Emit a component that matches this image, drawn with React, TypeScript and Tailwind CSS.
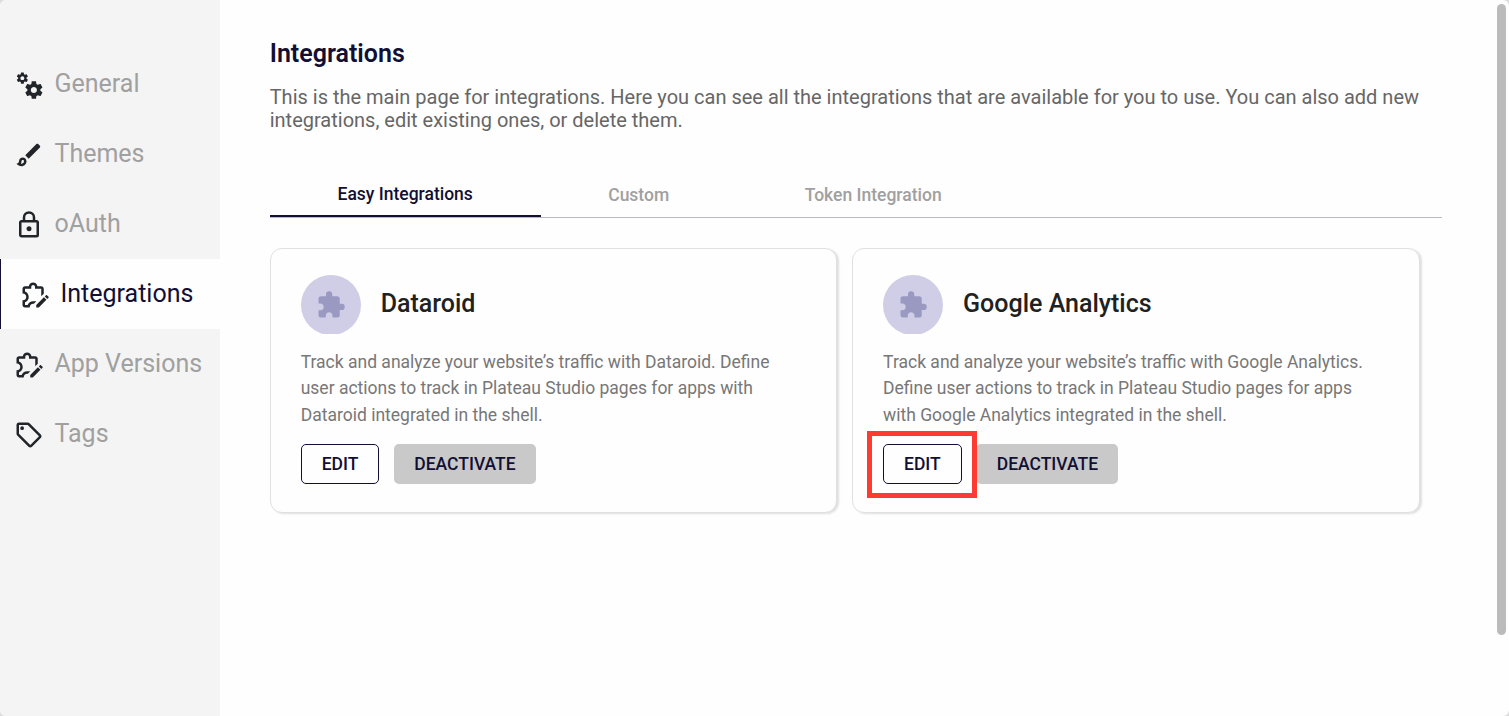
import React from "react";

const paths = {
  cogs: "M15.9,18.45C17.25,18.45 18.35,17.35 18.35,16C18.35,14.65 17.25,13.55 15.9,13.55C14.54,13.55 13.45,14.65 13.45,16C13.45,17.35 14.54,18.45 15.9,18.45M21.1,16.68L22.58,17.84C22.71,17.95 22.75,18.13 22.66,18.29L21.26,20.71C21.17,20.86 21,20.92 20.83,20.86L19.09,20.16C18.73,20.44 18.33,20.67 17.91,20.85L17.64,22.7C17.62,22.87 17.47,23 17.3,23H14.5C14.32,23 14.18,22.87 14.15,22.7L13.89,20.85C13.46,20.67 13.07,20.44 12.71,20.16L10.96,20.86C10.81,20.92 10.62,20.86 10.54,20.71L9.14,18.29C9.05,18.13 9.09,17.95 9.22,17.84L10.7,16.68L10.65,16L10.7,15.31L9.22,14.16C9.09,14.05 9.05,13.86 9.14,13.71L10.54,11.29C10.62,11.13 10.81,11.07 10.96,11.13L12.71,11.84C13.07,11.56 13.46,11.32 13.89,11.15L14.15,9.29C14.18,9.13 14.32,9 14.5,9H17.3C17.47,9 17.62,9.13 17.64,9.29L17.91,11.15C18.33,11.32 18.73,11.56 19.09,11.84L20.83,11.13C21,11.07 21.17,11.13 21.26,11.29L22.66,13.71C22.75,13.86 22.71,14.05 22.58,14.16L21.1,15.31L21.15,16L21.1,16.68M6.69,8.07C7.56,8.07 8.26,7.37 8.26,6.5C8.26,5.63 7.56,4.92 6.69,4.92C5.82,4.92 5.12,5.63 5.12,6.5C5.12,7.37 5.82,8.07 6.69,8.07M10.03,6.94L11,7.68C11.07,7.75 11.09,7.87 11.03,7.97L10.13,9.53C10.08,9.63 9.96,9.67 9.86,9.63L8.74,9.18L8,9.62L7.81,10.81C7.79,10.92 7.7,11 7.59,11H5.79C5.67,11 5.58,10.92 5.56,10.81L5.4,9.62L4.64,9.18L3.52,9.63C3.41,9.67 3.3,9.63 3.24,9.53L2.34,7.97C2.28,7.87 2.31,7.75 2.39,7.68L3.34,6.94L3.31,6.5L3.34,6.06L2.39,5.32C2.31,5.25 2.28,5.13 2.34,5.03L3.24,3.47C3.3,3.37 3.41,3.33 3.52,3.37L4.63,3.82L5.4,3.38L5.56,2.19C5.58,2.08 5.67,2 5.79,2H7.59C7.7,2 7.79,2.08 7.81,2.19L8,3.38L8.74,3.82L9.86,3.37C9.96,3.33 10.08,3.37 10.13,3.47L11.03,5.03C11.09,5.13 11.07,5.25 11,5.32L10.03,6.06L10.06,6.5L10.03,6.94Z",
  brush:
    "M7 16C7.55 16 8 16.45 8 17C8 18.1 7.1 19 6 19C5.83 19 5.67 19 5.5 18.95C5.81 18.4 6 17.74 6 17C6 16.45 6.45 16 7 16M18.67 3C18.41 3 18.16 3.1 17.96 3.29L9 12.25L11.75 15L20.71 6.04C21.1 5.65 21.1 5 20.71 4.63L19.37 3.29C19.17 3.09 18.92 3 18.67 3M7 14C5.34 14 4 15.34 4 17C4 18.31 2.84 19 2 19C2.92 20.22 4.5 21 6 21C8.21 21 10 19.21 10 17C10 15.34 8.66 14 7 14Z",
  lock: "M12,17C10.89,17 10,16.1 10,15C10,13.89 10.89,13 12,13A2,2 0 0,1 14,15A2,2 0 0,1 12,17M18,20V10H6V20H18M18,8A2,2 0 0,1 20,10V20A2,2 0 0,1 18,22H6C4.89,22 4,21.1 4,20V10C4,8.89 4.89,8 6,8H7V6A5,5 0 0,1 12,1A5,5 0 0,1 17,6V8H18M12,3A3,3 0 0,0 9,6V8H15V6A3,3 0 0,0 12,3Z",
  puzzleEdit:
    "M22.85 13.47L21.53 12.15C21.33 11.95 21 11.95 20.81 12.15L19.83 13.13L21.87 15.17L22.85 14.19C23.05 14 23.05 13.67 22.85 13.47M13 19.96V22H15.04L21.17 15.88L19.13 13.83L13 19.96M11.09 19.05C9.2 18.72 7.9 20 7.8 21.7V22H4C2.9 22 2 21.1 2 20V16.2H2.3C3.79 16.2 5 15 5 13.5S3.79 10.8 2.3 10.8H2V7C2 5.9 2.9 5 4 5H7.04C7.28 3.3 8.74 2 10.5 2S13.72 3.3 13.96 5H17C18.1 5 19 5.9 19 7V11L17 13V7H12V5.5C12 4.67 11.33 4 10.5 4S9 4.67 9 5.5V7H4V9.12C5.76 9.8 7 11.5 7 13.5S5.75 17.2 4 17.88V20H6.12C6.8 18.25 8.5 17 10.5 17L13.1 17.04L11.09 19.05Z",
  tag: "M21.41,11.58L12.41,2.58C12.04,2.21 11.53,2 11,2H4A2,2 0 0,0 2,4V11C2,11.53 2.21,12.04 2.59,12.41L11.59,21.41C11.96,21.79 12.47,22 13,22C13.53,22 14.04,21.79 14.41,21.41L21.41,14.41C21.79,14.04 22,13.53 22,13C22,12.47 21.79,11.96 21.41,11.58M13,20L4,11V4H11L20,13M6.5,5A1.5,1.5 0 0,1 8,6.5A1.5,1.5 0 0,1 6.5,8A1.5,1.5 0 0,1 5,6.5A1.5,1.5 0 0,1 6.5,5Z",
  puzzle:
    "M20.5,11H19V7C19,5.89 18.1,5 17,5H13V3.5A2.5,2.5 0 0,0 10.5,1A2.5,2.5 0 0,0 8,3.5V5H4A2,2 0 0,0 2,7V10.8H3.5C5,10.8 6.2,12 6.2,13.5C6.2,15 5,16.2 3.5,16.2H2V20A2,2 0 0,0 4,22H7.8V20.5C7.8,19 9,17.8 10.5,17.8C12,17.8 13.2,19 13.2,20.5V22H17A2,2 0 0,0 19,20V16H20.5A2.5,2.5 0 0,0 23,13.5A2.5,2.5 0 0,0 20.5,11Z",
};

function Icon({ name, className }: { name: keyof typeof paths; className: string }) {
  return (
    <svg viewBox="0 0 24 24" fill="currentColor" className={className} aria-hidden="true">
      <path d={paths[name]} />
    </svg>
  );
}

const nav: { label: string; icon: keyof typeof paths; active?: boolean }[] = [
  { label: "General", icon: "cogs" },
  { label: "Themes", icon: "brush" },
  { label: "oAuth", icon: "lock" },
  { label: "Integrations", icon: "puzzleEdit", active: true },
  { label: "App Versions", icon: "puzzleEdit" },
  { label: "Tags", icon: "tag" },
];

const cards = [
  {
    title: "Dataroid",
    lines: [
      "Track and analyze your website’s traffic with Dataroid. Define",
      "user actions to track in Plateau Studio pages for apps with",
      "Dataroid integrated in the shell.",
    ],
    highlight: false,
  },
  {
    title: "Google Analytics",
    lines: [
      "Track and analyze your website’s traffic with Google Analytics.",
      "Define user actions to track in Plateau Studio pages for apps",
      "with Google Analytics integrated in the shell.",
    ],
    highlight: true,
  },
];

export default function App() {
  return (
    <div className="bg-[#dcdcdc]">
      <div className="flex h-[716px] w-[1509px] overflow-hidden rounded-md bg-[#fefefe] font-['Roboto',sans-serif]">
        <nav className="w-[220px] shrink-0 bg-[#f4f4f4] pt-[49px]">
          {nav.map((item) => (
            <a
              key={item.label}
              className={
                item.active
                  ? "flex h-[70px] items-center border-l border-[#120f35] bg-[#fefefe] pl-[19.4px] text-[#120f35]"
                  : "flex h-[70px] items-center pl-[14.4px] text-[#a0a0a0]"
              }
            >
              <Icon name={item.icon} className="mt-px size-[30px] shrink-0 text-[#212529]" />
              <span className="ml-[10.1px] text-[25px] leading-[30px] whitespace-nowrap">{item.label}</span>
            </a>
          ))}
        </nav>

        <main className="flex-1 pt-[39px] pl-[49.7px]">
          <h1 className="text-[25px] leading-[30px] font-semibold text-[#120f35]">Integrations</h1>
          <p className="mt-[17px] text-[20px] leading-[23px] whitespace-nowrap text-[#666]">
            This is the main page for integrations. Here you can see all the integrations that are available for you to use. You can also add new
            <br />
            integrations, edit existing ones, or delete them.
          </p>

          <div className="mt-[39px] flex h-[47px] w-[1172px] border-b border-[#b9b9bf] text-[17.5px] font-medium text-[#a0a0a0]">
            <div className="flex w-[271px] items-center justify-center border-b-2 border-[#120f35] pt-[2px] text-[#120f35]">Easy Integrations</div>
            <div className="flex w-[196px] items-center justify-center pt-[2px]">Custom</div>
            <div className="flex w-[273px] items-center justify-center pt-[2px]">Token Integration</div>
          </div>

          <div className="mt-[30px] flex gap-[14.9px]">
            {cards.map((card) => (
              <section
                key={card.title}
                className="h-[265px] w-[567.5px] rounded-[12px] border border-[#e0e0e0] bg-[#fefefe] pt-[26px] pl-[30px] shadow-[2px_1px_2px_rgba(0,0,0,0.12)]"
              >
                <div className="flex h-[59px] items-start overflow-hidden">
                  <div className="flex size-[60px] items-center justify-center rounded-full bg-[#cfcee6] text-[#9a99c2]">
                    <Icon name="puzzle" className="size-[30px]" />
                  </div>
                  <h2 className="mt-[14px] ml-5 text-[25px] leading-[30px] font-medium text-[#212121]">{card.title}</h2>
                </div>
                <p className="mt-[15px] text-[17.5px] leading-[26.25px] whitespace-nowrap text-[#777]">
                  {card.lines.map((line) => (
                    <span key={line} className="block">
                      {line}
                    </span>
                  ))}
                </p>
                <div className="mt-[16.25px] flex gap-[14.8px] text-[17.5px] font-medium text-[#120f35]">
                  <button className="relative h-10 w-[78.6px] rounded-[5px] border border-[#120f35]">
                    EDIT
                    {card.highlight && <span className="absolute -top-[14.5px] -left-[17.4px] h-[67px] w-[110px] border-[5px] border-[#fe3b30]" />}
                  </button>
                  <button className="h-10 w-[141.8px] rounded-[5px] bg-[#c9c9c9]">DEACTIVATE</button>
                </div>
              </section>
            ))}
          </div>
        </main>
        <div className="mt-1 mr-[3px] h-[631px] w-[9px] shrink-0 rounded-full bg-[#bbb]" />
      </div>
    </div>
  );
}
